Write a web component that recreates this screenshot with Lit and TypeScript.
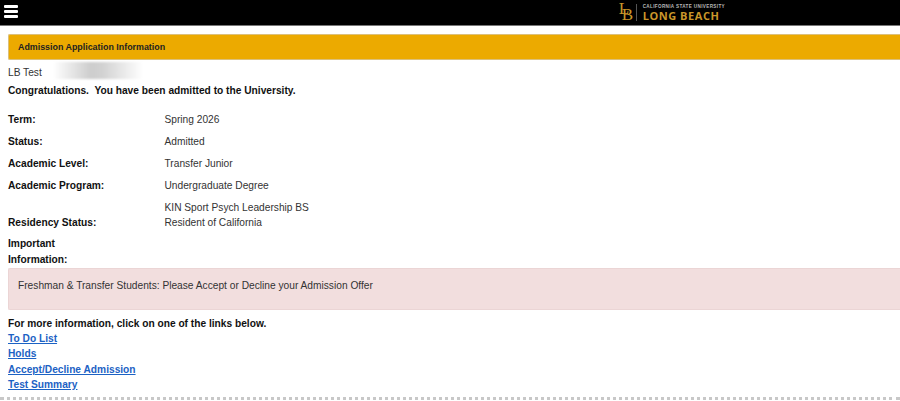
import { LitElement, css, html } from "lit";
import { customElement } from "lit/decorators.js";

const rows: [string, string][] = [
  ["Term:", "Spring 2026"],
  ["Status:", "Admitted"],
  ["Academic Level:", "Transfer Junior"],
  ["Academic Program:", "Undergraduate Degree"],
];

const links = ["To Do List", "Holds", "Accept/Decline Admission", "Test Summary"];

@customElement("app-root")
export class AppRoot extends LitElement {
  static styles = css`
    :host {
      display: block;
      height: 401px;
      overflow: hidden;
      background: #fff;
      color: #333;
      font-family: "Liberation Sans", Arial, sans-serif;
      font-size: 10.2px;
    }

    .top {
      height: 26px;
      background: #000;
      border-bottom: 1px solid #777;
      display: flex;
      align-items: center;
      justify-content: space-between;
      padding: 0 0 1px 4px;
      box-sizing: border-box;
    }

    .burger {
      display: flex;
      flex-direction: column;
      gap: 2px;
      width: 14px;
      margin-bottom: 1px;
    }

    .burger i {
      display: block;
      height: 3px;
      border-radius: 1px;
      background: #fff;
    }

    .logo {
      display: flex;
      align-items: center;
      margin-right: 175px;
      color: #c9962a;
    }

    .lb {
      position: relative;
      width: 13px;
      height: 18px;
      font-family: "Liberation Serif", serif;
      font-size: 17px;
      line-height: 17px;
    }

    .lb span {
      position: absolute;
    }

    .lb .l {
      left: 0;
      top: -3px;
    }

    .lb .b {
      left: 3px;
      top: 3px;
    }

    .logo-text {
      border-left: 1px solid #555;
      margin-left: 4px;
      padding-left: 6px;
      display: flex;
      flex-direction: column;
    }

    .cal {
      color: #b8b8b8;
      font-size: 4.6px;
      font-weight: 700;
      line-height: 6px;
      letter-spacing: 0.36px;
    }

    .long {
      font-family: "Open Sans", sans-serif;
      font-size: 11px;
      font-weight: 700;
      line-height: 11px;
      letter-spacing: 0.55px;
    }

    .main {
      padding: 8px 0 0 8px;
    }

    .banner {
      height: 26px;
      box-sizing: border-box;
      background: #ecaa00;
      border: 1px solid #dcc07a;
      border-right: 0;
      border-radius: 2px 0 0 2px;
      padding: 0 0 1px 9px;
      display: flex;
      align-items: center;
      font-size: 8.9px;
      font-weight: 700;
      color: #222;
    }

    .name {
      height: 18px;
      display: flex;
      align-items: center;
      position: relative;
      margin-top: 3px;
    }

    .smudge {
      position: absolute;
      left: 45px;
      top: -1px;
      width: 90px;
      height: 17px;
      background: linear-gradient(90deg, #fff 0%, #cdcdcd 42%, #d2d2d2 55%, #fff 100%);
      filter: blur(1px);
    }

    .congrats {
      font-weight: 700;
      color: #111;
      line-height: 14px;
      margin: 3px 0 11px;
    }

    .info {
      display: grid;
      grid-template-columns: 156.5px 1fr;
    }

    .cell {
      height: 22px;
      line-height: 22px;
    }

    .label {
      font-weight: 700;
      color: #111;
    }

    .kin {
      height: 14px;
      line-height: 14px;
      padding-top: 4px;
    }

    .short {
      height: 16px;
      line-height: 16px;
    }

    .important {
      width: 70px;
      font-weight: 700;
      color: #111;
      line-height: 16px;
      margin-top: 5px;
    }

    .alert {
      height: 42px;
      box-sizing: border-box;
      background: #f2dede;
      border: 1px solid #ebd5d5;
      border-right: 0;
      border-radius: 2px 0 0 2px;
      padding: 10px 0 0 9px;
      line-height: 14px;
    }

    .more {
      font-weight: 700;
      color: #111;
      line-height: 15px;
      margin-top: 6px;
    }

    .links a {
      display: block;
      width: fit-content;
      height: 15.3px;
      line-height: 15.3px;
      color: #1c62c4;
      font-weight: 700;
      text-decoration: underline;
    }

    .rule {
      margin: 5px 0 0 -8px;
      border-top: 3px dotted #c8c8c8;
    }
  `;

  render() {
    return html`
      <header class="top">
        <div class="burger"><i></i><i></i><i></i></div>
        <div class="logo">
          <div class="lb"><span class="l">L</span><span class="b">B</span></div>
          <div class="logo-text">
            <span class="cal">CALIFORNIA STATE UNIVERSITY</span>
            <span class="long">LONG BEACH</span>
          </div>
        </div>
      </header>
      <main class="main">
        <div class="banner">Admission Application Information</div>
        <div class="name">LB Test<span class="smudge"></span></div>
        <div class="congrats">Congratulations.&nbsp; You have been admitted to the University.</div>
        <div class="info">
          ${rows.map(
            ([label, value]) => html`
              <div class="cell label">${label}</div>
              <div class="cell">${value}</div>
            `
          )}
          <div></div>
          <div class="kin">KIN Sport Psych Leadership BS</div>
          <div class="short label">Residency Status:</div>
          <div class="short">Resident of California</div>
        </div>
        <div class="important">Important Information:</div>
        <div class="alert">Freshman &amp; Transfer Students: Please Accept or Decline your Admission Offer</div>
        <div class="more">For more information, click on one of the links below.</div>
        <div class="links">
          ${links.map((l) => html`<a href="#">${l}</a>`)}
        </div>
        <div class="rule"></div>
      </main>
    `;
  }
}

declare global {
  interface HTMLElementTagNameMap {
    "app-root": AppRoot;
  }
}
